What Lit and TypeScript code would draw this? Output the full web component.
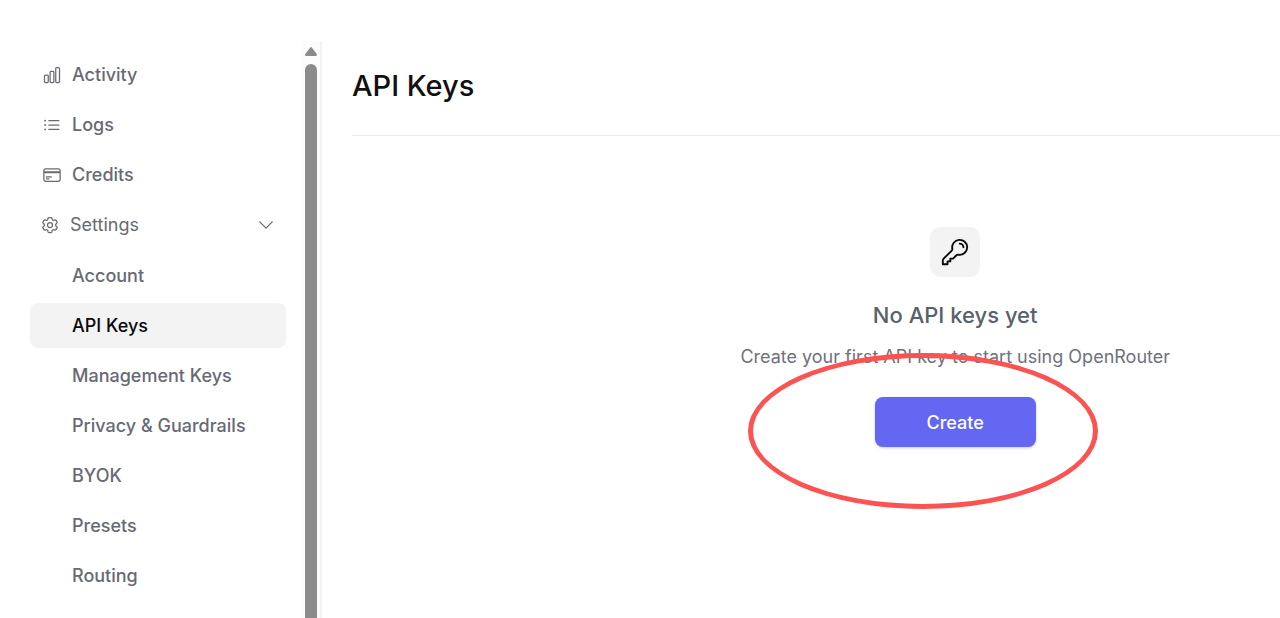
import { LitElement, html, css, svg } from "lit";
import { customElement, property, state } from "lit/decorators.js";

const ICONS: Record<string, string> = {
  activity:
    "M3 13.125C3 12.504 3.504 12 4.125 12h2.25c.621 0 1.125.504 1.125 1.125v6.75C7.5 20.496 6.996 21 6.375 21h-2.25A1.125 1.125 0 0 1 3 19.875v-6.75ZM9.75 8.625c0-.621.504-1.125 1.125-1.125h2.25c.621 0 1.125.504 1.125 1.125v11.25c0 .621-.504 1.125-1.125 1.125h-2.25a1.125 1.125 0 0 1-1.125-1.125V8.625ZM16.5 4.125c0-.621.504-1.125 1.125-1.125h2.25C20.496 3 21 3.504 21 4.125v15.75c0 .621-.504 1.125-1.125 1.125h-2.25a1.125 1.125 0 0 1-1.125-1.125V4.125Z",
  logs:
    "M8.25 6.75h12M8.25 12h12m-12 5.25h12M3.75 6.75h.007v.008H3.75V6.75Zm.375 0a.375.375 0 1 1-.75 0 .375.375 0 0 1 .75 0ZM3.75 12h.007v.008H3.75V12Zm.375 0a.375.375 0 1 1-.75 0 .375.375 0 0 1 .75 0Zm-.375 5.25h.007v.008H3.75v-.008Zm.375 0a.375.375 0 1 1-.75 0 .375.375 0 0 1 .75 0Z",
  credits:
    "M2.25 8.25h19.5M2.25 9h19.5m-16.5 5.25h6m-6 2.25h3m-3.75 3h15a2.25 2.25 0 0 0 2.25-2.25V6.75A2.25 2.25 0 0 0 19.5 4.5h-15a2.25 2.25 0 0 0-2.25 2.25v10.5A2.25 2.25 0 0 0 4.5 19.5Z",
  settings:
    "M9.594 3.94c.09-.542.56-.94 1.11-.94h2.593c.55 0 1.02.398 1.11.94l.213 1.281c.063.374.313.686.645.87.074.04.147.083.22.127.325.196.72.257 1.075.124l1.217-.456a1.125 1.125 0 0 1 1.37.49l1.296 2.247a1.125 1.125 0 0 1-.26 1.431l-1.003.827c-.293.241-.438.613-.43.992a7.723 7.723 0 0 1 0 .255c-.008.378.137.75.43.991l1.004.827c.424.35.534.955.26 1.43l-1.298 2.247a1.125 1.125 0 0 1-1.369.491l-1.217-.456c-.355-.133-.75-.072-1.076.124a6.47 6.47 0 0 1-.22.128c-.331.183-.581.495-.644.869l-.213 1.281c-.09.543-.56.94-1.11.94h-2.594c-.55 0-1.019-.398-1.11-.94l-.213-1.281c-.062-.374-.312-.686-.644-.87a6.52 6.52 0 0 1-.22-.127c-.325-.196-.72-.257-1.076-.124l-1.217.456a1.125 1.125 0 0 1-1.369-.49l-1.297-2.247a1.125 1.125 0 0 1 .26-1.431l1.004-.827c.292-.24.437-.613.43-.991a6.932 6.932 0 0 1 0-.255c.007-.38-.138-.751-.43-.992l-1.004-.827a1.125 1.125 0 0 1-.26-1.43l1.297-2.247a1.125 1.125 0 0 1 1.37-.491l1.216.456c.356.133.751.072 1.076-.124.072-.044.146-.086.22-.128.332-.183.582-.495.644-.869l.214-1.28ZM15 12a3 3 0 1 1-6 0 3 3 0 0 1 6 0Z",
  chevron: "m19.5 8.25-7.5 7.5-7.5-7.5",
  key:
    "M15.75 5.25a3 3 0 0 1 3 3m3 0a6 6 0 0 1-7.029 5.912c-.563-.097-1.159.026-1.563.43L10.5 17.25H8.25v2.25H6v2.25H2.25v-2.818c0-.597.237-1.17.659-1.591l6.499-6.499c.404-.404.527-1 .43-1.563A6 6 0 1 1 21.75 8.25Z",
};

@customElement("line-icon")
export class LineIcon extends LitElement {
  static styles = css`
    :host {
      display: block;
      flex: none;
      width: 20px;
      height: 20px;
    }
    .icon {
      display: block;
      width: 100%;
      height: 100%;
      fill: none;
      stroke: currentColor;
      stroke-width: 1.5;
      stroke-linecap: round;
      stroke-linejoin: round;
    }
  `;

  @property() name = "";

  render() {
    return html`<svg class="icon" viewBox="0 0 24 24" aria-hidden="true">
      ${svg`<path d=${ICONS[this.name] ?? ""}></path>`}
    </svg>`;
  }
}

@customElement("side-nav")
export class SideNav extends LitElement {
  static styles = css`
    :host {
      display: flex;
      border-right: 2px solid #f3f3f4;
    }
    .nav {
      flex: 1;
      padding: 11px 16px 16px 30px;
    }
    .list {
      display: grid;
      gap: 5px;
      margin: 0;
      padding: 0;
      list-style: none;
    }
    .sub {
      margin-top: 6px;
    }
    .row {
      display: flex;
      align-items: center;
      gap: 10px;
      box-sizing: border-box;
      width: 100%;
      height: 45px;
      padding: 0 10px 0 12px;
      border: 0;
      border-radius: 8px;
      background: none;
      color: #696973;
      font: inherit;
      font-size: 18px;
      font-weight: 500;
      line-height: 24px;
      text-align: left;
      text-decoration: none;
      cursor: pointer;
    }
    .toggle {
      padding-left: 10px;
      font-weight: 400;
    }
    .toggle .label {
      flex: 1;
    }
    .nested {
      padding-left: 42px;
    }
    .active {
      background: #f3f3f3;
      color: #09090b;
    }
    .track {
      display: flex;
      flex-direction: column;
      align-items: center;
      gap: 8px;
      width: 18px;
      padding-top: 6px;
      background: #fcfcfc;
    }
    .arrow {
      display: block;
      width: 12px;
      height: 9px;
      fill: #8b8b8b;
    }
    .thumb {
      flex: 1;
      width: 12px;
      border-radius: 6px 6px 0 0;
      background: #8b8b8b;
    }
  `;

  @state() private open = true;

  private main = [
    ["activity", "Activity"],
    ["logs", "Logs"],
    ["credits", "Credits"],
  ];

  private settings = [
    "Account",
    "API Keys",
    "Management Keys",
    "Privacy & Guardrails",
    "BYOK",
    "Presets",
    "Routing",
  ];

  render() {
    return html`
      <nav class="nav" aria-label="Workspace">
        <ul class="list">
          ${this.main.map(
            ([icon, label]) => html`<li>
              <a class="row" href="#"><line-icon name=${icon}></line-icon>${label}</a>
            </li>`
          )}
          <li>
            <button
              class="row toggle"
              type="button"
              aria-expanded=${this.open}
              @click=${() => (this.open = !this.open)}
            >
              <line-icon name="settings"></line-icon>
              <span class="label">Settings</span>
              <line-icon name="chevron"></line-icon>
            </button>
            ${this.open
              ? html`<ul class="list sub">
                  ${this.settings.map(
                    (label) => html`<li>
                      <a class="row nested ${label === "API Keys" ? "active" : ""}" href="#">${label}</a>
                    </li>`
                  )}
                </ul>`
              : ""}
          </li>
        </ul>
      </nav>
      <div class="track" aria-hidden="true">
        <svg class="arrow" viewBox="0 0 12 9">
          <path d="M5 .7Q6-.5 7 .7L11.7 7Q12.5 9 10.8 9H1.2Q-.5 9 .3 7Z"></path>
        </svg>
        <div class="thumb"></div>
      </div>
    `;
  }
}

@customElement("app-root")
export class AppRoot extends LitElement {
  static styles = css`
    :host {
      display: grid;
      grid-template-columns: 322px minmax(0, 1fr);
      box-sizing: border-box;
      height: 100vh;
      padding-top: 41px;
      overflow: hidden;
      background: #fff;
      font-family: Inter, "Liberation Sans", sans-serif;
    }
    .content {
      padding-left: 30px;
      overflow: hidden;
    }
    /* The page is wider than the visible pane and runs past its right edge. */
    .page {
      width: 130%;
    }
    .title {
      margin: 0;
      padding: 25px 0 29px;
      border-bottom: 1px solid #ececee;
      color: #111113;
      font-size: 29px;
      font-weight: 500;
      line-height: 40px;
    }
    .empty {
      display: flex;
      flex-direction: column;
      align-items: center;
      padding-top: 91px;
    }
    .badge {
      display: grid;
      place-items: center;
      width: 50px;
      height: 50px;
      border-radius: 10px;
      background: #f3f3f3;
      color: #09090b;
    }
    .key {
      width: 30px;
      height: 30px;
    }
    .heading {
      margin: 23px 0 0;
      color: #5b616b;
      font-size: 22px;
      font-weight: 500;
      line-height: 30px;
    }
    .text {
      margin: 15px 0 0;
      color: #71717a;
      font-size: 18px;
      line-height: 24px;
    }
    .action {
      position: relative;
      margin-top: 28px;
    }
    .create {
      display: block;
      width: 161px;
      height: 50px;
      border: 0;
      border-radius: 8px;
      background: #6467f2;
      box-shadow: 0 1px 3px rgb(0 0 0 / 20%);
      color: #fff;
      font: inherit;
      font-size: 18px;
      font-weight: 500;
      cursor: pointer;
    }
    .ring {
      position: absolute;
      top: -44px;
      left: -127px;
      box-sizing: border-box;
      width: 350px;
      height: 156px;
      border: 5px solid #fb5252;
      border-radius: 50%;
      pointer-events: none;
    }
  `;

  render() {
    return html`
      <side-nav></side-nav>
      <main class="content">
        <div class="page">
          <h1 class="title">API Keys</h1>
          <section class="empty">
            <div class="badge"><line-icon class="key" name="key"></line-icon></div>
            <h2 class="heading">No API keys yet</h2>
            <p class="text">Create your first API key to start using OpenRouter</p>
            <div class="action">
              <button class="create" type="button">Create</button>
              <div class="ring" aria-hidden="true"></div>
            </div>
          </section>
        </div>
      </main>
    `;
  }
}
